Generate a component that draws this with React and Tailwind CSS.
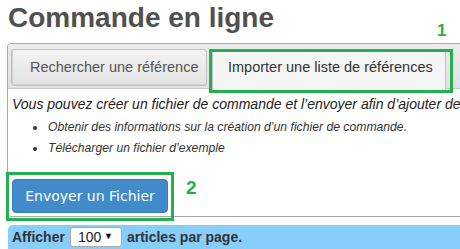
export default function App() {
  return (
    <div className="relative w-[460px] h-[249px] overflow-hidden bg-white font-['Liberation_Sans',Arial,sans-serif]">
      <h1 className="pl-[8px] pt-[2px] text-[28px] leading-[32px] font-bold text-[#505050]">Commande en ligne</h1>

      {/* annotation 1 */}
      <span className="absolute left-[437px] top-[18px] text-[17px] font-bold text-[#22b14c]">1</span>

      <div className="ml-[7px] mt-[9px] w-[520px] h-[174px] border border-[#aaaaaa] rounded-[4px]">
        <div className="flex items-start gap-[5px] h-[45px] pl-[3px] pt-[5px] bg-gradient-to-b from-[#ececec] to-[#e2e2e2] border-b border-[#c8c8c8] rounded-t-[4px]">
          <div className="w-[196px] h-[37px] flex items-center pl-[18px] text-[14.5px] text-[#555] bg-gradient-to-b from-[#f3f3f3] to-[#e3e3e3] border border-[#c0c0c0] rounded-[3px] shadow-[inset_1px_-1px_0_#d0d0d0]">
            Rechercher une référence
          </div>
          <div className="w-[234px] h-[41px] flex items-center pl-[15px] pb-[4px] text-[14.5px] text-[#333] bg-[#f5f5f5] border border-b-0 border-[#c0c0c0] rounded-t-[3px]">
            Importer une liste de références
          </div>
        </div>
        <div className="pl-[4px] pt-[6px]">
          <p className="text-[14px] italic text-[#222] whitespace-nowrap leading-[18px]">
            Vous pouvez créer un fichier de commande et l’envoyer afin d’ajouter des références
          </p>
          <ul className="mt-[4px] text-[12.2px] italic text-[#333]">
            <li className="flex items-center h-[21px]">
              <span className="ml-[21px] mr-[11px] w-[4px] h-[4px] rounded-full bg-[#333]"></span>
              Obtenir des informations sur la création d’un fichier de commande.
            </li>
            <li className="flex items-center h-[21px]">
              <span className="ml-[21px] mr-[11px] w-[4px] h-[4px] rounded-full bg-[#333]"></span>
              Télécharger un fichier d’exemple
            </li>
          </ul>
          <button className="mt-[20px] w-[156px] h-[34px] rounded-[4px] bg-[#428bca] border border-[#357ebd] text-white text-[14px] font-['DejaVu_Sans',Verdana,sans-serif]">
            Envoyer un Fichier
          </button>
        </div>
      </div>

      {/* annotation 2 */}
      <div className="absolute left-[6px] top-[172px] w-[168px] h-[49px] border-[3px] border-[#22b14c]"></div>
      <span className="absolute left-[186px] top-[174px] text-[19px] font-bold text-[#22b14c]">2</span>
      {/* tab highlight */}
      <div className="absolute left-[209px] top-[49px] w-[244px] h-[44px] border-[3px] border-[#22b14c]"></div>

      <div className="ml-[8px] mt-[8px] h-[30px] flex items-start pt-[2px] pl-[4px] gap-[5px] bg-[#87cefa] rounded-tl-[5px] text-[14px] font-bold text-[#333]">
        <span className="leading-[20px]">Afficher</span>
        <div className="w-[52px] h-[20px] flex items-center justify-between pl-[7px] pr-[8px] bg-white border border-[#aaa] rounded-[3px] font-normal text-[#222]">
          <span>100</span>
          <span className="text-[9px] text-black">▼</span>
        </div>
        <span className="leading-[20px]">articles par page.</span>
      </div>
    </div>
  );
}
